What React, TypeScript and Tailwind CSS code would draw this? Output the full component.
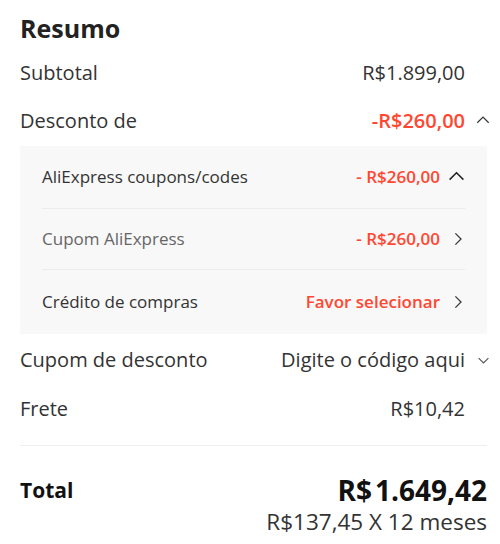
import React from 'react';

function Chevron({ dir, className }: { dir: 'up' | 'down' | 'right'; className?: string }) {
  const d =
    dir === 'up' ? 'M1.5 10 L8 3.5 L14.5 10' : dir === 'down' ? 'M2 5 L8 11 L14 5' : 'M5 1.5 L11.5 8 L5 14.5';
  return (
    <svg viewBox="0 0 16 16" className={className} fill="none" stroke="currentColor" strokeWidth={1.4}>
      <path d={d} />
    </svg>
  );
}

type SubRow = { label: string; value: string; labelColor: string; dir: 'up' | 'right' };

const subRows: SubRow[] = [
  { label: 'AliExpress coupons/codes', value: '- R$260,00', labelColor: 'text-[#333]', dir: 'up' },
  { label: 'Cupom AliExpress', value: '- R$260,00', labelColor: 'text-[#666]', dir: 'right' },
  { label: 'Crédito de compras', value: 'Favor selecionar', labelColor: 'text-[#333]', dir: 'right' },
];

export default function App() {
  return (
    <div className="w-[500px] h-[544px] bg-white pl-5 pr-[13px] font-['Open_Sans',sans-serif] text-[#333]">
      <h2 className="pt-[11px] h-[50px] text-[25px] leading-[34px] font-bold text-[#222]">Resumo</h2>

      {/* subtotal */}
      <div className="flex items-center h-[45px] text-[20px]">
        <span className="flex-1">Subtotal</span>
        <span>R$1.899,00</span>
        <span className="w-[22px]" />
      </div>

      {/* desconto */}
      <div className="flex items-center h-[51px] text-[20px]">
        <span className="flex-1">Desconto de</span>
        <span className="text-[#ff4732] font-semibold">-R$260,00</span>
        <span className="w-[25px] mr-[-3px] flex justify-end">
          <Chevron dir="up" className="w-[14px] h-[14px] text-[#333]" />
        </span>
      </div>

      <div className="bg-[#f8f8f8] px-[22px] text-[17px]">
        {subRows.map((r, i) => (
          <div
            key={r.label}
            className={`flex items-center ${i === 0 ? 'h-[63px]' : i === 1 ? 'h-[61px]' : 'h-[64px]'} ${
              i < 2 ? 'border-b border-[#ececec]' : ''
            }`}
          >
            <span className={`flex-1 ${r.labelColor}`}>{r.label}</span>
            <span className="text-[#ff4732] font-semibold">{r.value}</span>
            <span className="w-[25px] flex justify-end">
              <Chevron
                dir={r.dir}
                className={r.dir === 'up' ? 'w-[17px] h-[17px] text-[#222]' : 'w-[14px] h-[14px] text-[#333]'}
              />
            </span>
          </div>
        ))}
      </div>

      {/* cupom */}
      <div className="flex items-center h-[52px] text-[20px]">
        <span className="flex-1">Cupom de desconto</span>
        <span>Digite o código aqui</span>
        <span className="w-[25px] mr-[-3px] flex justify-end">
          <Chevron dir="down" className="w-[13px] h-[13px] text-[#555]" />
        </span>
      </div>

      <div className="flex items-center h-[46px] text-[20px]">
        <span className="flex-1">Frete</span>
        <span>R$10,42</span>
        <span className="w-[22px]" />
      </div>

      <div className="mt-[13px] border-t border-[#eeeeee]" />

      <div className="flex items-start pt-[27px]">
        <span className="flex-1 text-[21px] leading-[34px] font-bold text-[#111]">Total</span>
        <div className="flex flex-col items-end">
          <span className="text-[28px] leading-[34px] font-bold text-[#111]">
            R$<span className="ml-[3px]">1.649,42</span>
          </span>
          <span className="text-[22.5px] leading-[30px] text-[#333]">R$137,45 X 12 meses</span>
        </div>
      </div>
    </div>
  );
}
